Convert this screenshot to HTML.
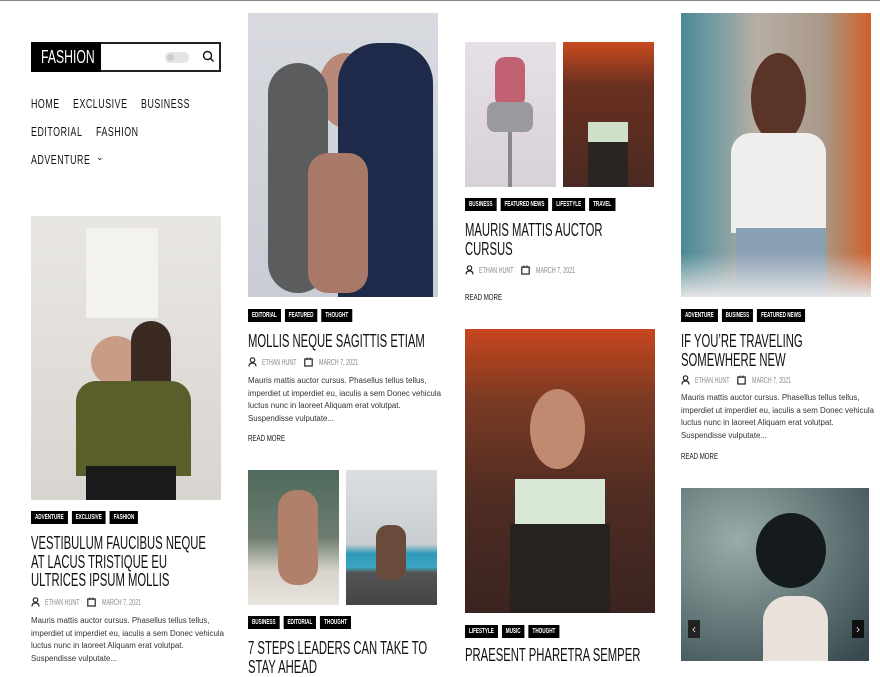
<!DOCTYPE html>
<html><head><meta charset="utf-8"><style>
*{margin:0;padding:0;box-sizing:border-box}
body{width:880px;height:660px;overflow:hidden;background:#fff;position:relative;font-family:"Liberation Sans",sans-serif;border-top:1px solid #888}
.a{position:absolute}
.s{transform-origin:0 0;white-space:nowrap}
.img{position:absolute;overflow:hidden}
.tags{position:absolute;display:flex;gap:6px;transform:scaleX(.66);transform-origin:0 0}
.tags span{background:#000;color:#fff;font-weight:bold;font-size:7px;height:13px;line-height:13px;padding:0 6px;text-transform:uppercase;white-space:nowrap}
.t{position:absolute;font-size:18.5px;line-height:18.5px;color:#111;text-transform:uppercase;white-space:nowrap;transform:scaleX(.61);transform-origin:0 0}
.mt{position:absolute;font-size:8px;color:#888;transform:scaleX(.67);transform-origin:0 0;white-space:nowrap}
.x{position:absolute;font-size:7.9px;line-height:12.5px;color:#333;white-space:nowrap}
.r{position:absolute;font-size:8.5px;color:#111;transform:scaleX(.72);transform-origin:0 0;white-space:nowrap}
.nav{position:absolute;font-size:13px;color:#111;transform:scaleX(.68);transform-origin:0 0;white-space:nowrap;letter-spacing:.8px}
</style></head><body>
<!-- header -->
<div class="a" style="left:31px;top:41px;width:190px;height:30px;border:2px solid #222"></div>
<div class="a" style="left:31px;top:41px;width:70px;height:30px;background:#000"></div>
<div class="a s" style="left:41px;top:46px;color:#fff;font-size:18px;line-height:20px;transform:scaleX(.68)">FASHION</div>
<div class="a" style="left:165px;top:51px;width:24px;height:11px;border-radius:6px;background:#e4e4e4"></div>
<div class="a" style="left:167px;top:53px;width:7px;height:7px;border-radius:50%;background:#ccc"></div>
<svg class="a" style="left:202px;top:49px" width="13" height="13" viewBox="0 0 13 13"><circle cx="5.5" cy="5.5" r="4" fill="none" stroke="#111" stroke-width="1.4"/><line x1="8.5" y1="8.5" x2="11.5" y2="11.5" stroke="#111" stroke-width="1.4"/></svg>
<div class="nav" style="left:31px;top:95px">HOME</div>
<div class="nav" style="left:73px;top:95px">EXCLUSIVE</div>
<div class="nav" style="left:141px;top:95px">BUSINESS</div>
<div class="nav" style="left:31px;top:123px">EDITORIAL</div>
<div class="nav" style="left:96px;top:123px">FASHION</div>
<div class="nav" style="left:31px;top:151px">ADVENTURE</div>
<div class="a" style="left:96px;top:151px;font-size:9px">&#8964;</div>

<!-- col1 -->
<div class="img" style="left:31px;top:215px;width:190px;height:284px;background:linear-gradient(180deg,#e8e6e3 0%,#e2dfdc 40%,#d8d5d0 100%)">
 <div class="a" style="left:55px;top:12px;width:72px;height:90px;background:#f4f2ee"></div>
 <div class="a" style="left:60px;top:120px;width:50px;height:50px;border-radius:50%;background:#c89c86"></div>
 <div class="a" style="left:100px;top:105px;width:40px;height:100px;background:#3a2a22;border-radius:20px"></div>
 <div class="a" style="left:45px;top:165px;width:115px;height:95px;background:#5a5e2a;border-radius:20px 20px 0 0"></div>
 <div class="a" style="left:55px;top:250px;width:90px;height:34px;background:#1a1a1a"></div>
</div>
<div class="tags" style="left:31px;top:510px"><span>Adventure</span><span>Exclusive</span><span>Fashion</span></div>
<div class="t" style="left:31px;top:533px">Vestibulum faucibus neque<br>at lacus tristique eu<br>ultrices ipsum mollis</div>
<svg class="a" style="left:31px;top:596px" width="9" height="10" viewBox="0 0 9 10"><circle cx="4.5" cy="3" r="2.2" fill="none" stroke="#222" stroke-width="1.2"/><path d="M1 9.5c0-2.5 1.5-3.5 3.5-3.5s3.5 1 3.5 3.5" fill="none" stroke="#222" stroke-width="1.2"/></svg>
<div class="mt" style="left:45px;top:597px">ETHAN HUNT</div>
<svg class="a" style="left:87px;top:596px" width="9" height="10" viewBox="0 0 9 10"><rect x="0.8" y="2" width="7.4" height="7" fill="none" stroke="#222" stroke-width="1.2"/><line x1="3" y1="0.5" x2="3" y2="3" stroke="#222"/><line x1="6" y1="0.5" x2="6" y2="3" stroke="#222"/></svg>
<div class="mt" style="left:102px;top:597px">MARCH 7, 2021</div>
<div class="x" style="left:31px;top:614px">Mauris mattis auctor cursus. Phasellus tellus tellus,<br>imperdiet ut imperdiet eu, iaculis a sem Donec vehicula<br>luctus nunc in laoreet Aliquam erat volutpat.<br>Suspendisse vulputate...</div>

<!-- col2 -->
<div class="img" style="left:248px;top:12px;width:190px;height:284px;background:linear-gradient(180deg,#d8dae0,#c9ccd4)">
 <div class="a" style="left:70px;top:40px;width:55px;height:75px;border-radius:50%;background:#b88878"></div>
 <div class="a" style="left:20px;top:50px;width:60px;height:230px;background:#5a5c5e;border-radius:30px"></div>
 <div class="a" style="left:90px;top:30px;width:95px;height:254px;background:#1e2a4a;border-radius:40px 40px 0 0"></div>
 <div class="a" style="left:60px;top:140px;width:60px;height:140px;background:#a87868;border-radius:20px"></div>
</div>
<div class="tags" style="left:248px;top:308px"><span>Editorial</span><span>Featured</span><span>Thought</span></div>
<div class="t" style="left:248px;top:331px">Mollis neque sagittis etiam</div>
<svg class="a" style="left:248px;top:356px" width="9" height="10" viewBox="0 0 9 10"><circle cx="4.5" cy="3" r="2.2" fill="none" stroke="#222" stroke-width="1.2"/><path d="M1 9.5c0-2.5 1.5-3.5 3.5-3.5s3.5 1 3.5 3.5" fill="none" stroke="#222" stroke-width="1.2"/></svg>
<div class="mt" style="left:262px;top:357px">ETHAN HUNT</div>
<svg class="a" style="left:304px;top:356px" width="9" height="10" viewBox="0 0 9 10"><rect x="0.8" y="2" width="7.4" height="7" fill="none" stroke="#222" stroke-width="1.2"/><line x1="3" y1="0.5" x2="3" y2="3" stroke="#222"/><line x1="6" y1="0.5" x2="6" y2="3" stroke="#222"/></svg>
<div class="mt" style="left:319px;top:357px">MARCH 7, 2021</div>
<div class="x" style="left:248px;top:374px">Mauris mattis auctor cursus. Phasellus tellus tellus,<br>imperdiet ut imperdiet eu, iaculis a sem Donec vehicula<br>luctus nunc in laoreet Aliquam erat volutpat.<br>Suspendisse vulputate...</div>
<div class="r" style="left:248px;top:432px">READ MORE</div>
<div class="img" style="left:248px;top:469px;width:91px;height:135px;background:linear-gradient(180deg,#4f6a5c 0%,#6d7c70 50%,#d8d4cc 75%,#e8e4de)">
 <div class="a" style="left:30px;top:20px;width:40px;height:95px;background:#b0806a;border-radius:18px"></div>
</div>
<div class="img" style="left:346px;top:469px;width:91px;height:135px;background:linear-gradient(180deg,#dcdfe2 0%,#c9cdd0 55%,#2e9ab8 62%,#3aa6c4 72%,#555 76%,#444)">
 <div class="a" style="left:30px;top:55px;width:30px;height:55px;background:#6a4a3a;border-radius:12px"></div>
</div>
<div class="tags" style="left:248px;top:615px"><span>Business</span><span>Editorial</span><span>Thought</span></div>
<div class="t" style="left:248px;top:638px">7 steps leaders can take to<br>stay ahead</div>

<!-- col3 -->
<div class="img" style="left:465px;top:41px;width:91px;height:145px;background:linear-gradient(180deg,#e6e0e6,#d8d2d8)">
 <div class="a" style="left:30px;top:15px;width:30px;height:50px;background:#c06070;border-radius:10px"></div>
 <div class="a" style="left:22px;top:60px;width:46px;height:30px;background:#9a9a9e;border-radius:8px"></div>
 <div class="a" style="left:43px;top:90px;width:4px;height:55px;background:#888"></div>
</div>
<div class="img" style="left:563px;top:41px;width:91px;height:145px;background:linear-gradient(180deg,#c84a20,#6a3020 30%,#4a2a22)">
 <div class="a" style="left:25px;top:80px;width:40px;height:20px;background:#cfe0c8"></div>
 <div class="a" style="left:25px;top:100px;width:40px;height:45px;background:#2a2422"></div>
</div>
<div class="tags" style="left:465px;top:197px"><span>Business</span><span>Featured News</span><span>Lifestyle</span><span>Travel</span></div>
<div class="t" style="left:465px;top:220px">Mauris mattis auctor<br>cursus</div>
<svg class="a" style="left:465px;top:264px" width="9" height="10" viewBox="0 0 9 10"><circle cx="4.5" cy="3" r="2.2" fill="none" stroke="#222" stroke-width="1.2"/><path d="M1 9.5c0-2.5 1.5-3.5 3.5-3.5s3.5 1 3.5 3.5" fill="none" stroke="#222" stroke-width="1.2"/></svg>
<div class="mt" style="left:479px;top:265px">ETHAN HUNT</div>
<svg class="a" style="left:521px;top:264px" width="9" height="10" viewBox="0 0 9 10"><rect x="0.8" y="2" width="7.4" height="7" fill="none" stroke="#222" stroke-width="1.2"/><line x1="3" y1="0.5" x2="3" y2="3" stroke="#222"/><line x1="6" y1="0.5" x2="6" y2="3" stroke="#222"/></svg>
<div class="mt" style="left:536px;top:265px">MARCH 7, 2021</div>
<div class="r" style="left:465px;top:291px">READ MORE</div>
<div class="img" style="left:465px;top:328px;width:190px;height:284px;background:linear-gradient(180deg,#c8461e 0%,#7a3a24 25%,#4e2c22 60%,#3a2420)">
 <div class="a" style="left:65px;top:60px;width:55px;height:80px;border-radius:50%;background:#c08a70"></div>
 <div class="a" style="left:50px;top:150px;width:90px;height:45px;background:#d8e8d4"></div>
 <div class="a" style="left:45px;top:195px;width:100px;height:89px;background:#262220"></div>
</div>
<div class="tags" style="left:465px;top:624px"><span>Lifestyle</span><span>Music</span><span>Thought</span></div>
<div class="t" style="left:465px;top:645px">Praesent pharetra semper</div>

<!-- col4 -->
<div class="img" style="left:681px;top:12px;width:190px;height:284px;background:linear-gradient(90deg,#4a8894 0%,#6f9aa2 15%,#b8aea4 40%,#a89888 75%,#d0602a 100%)">
 <div class="a" style="left:70px;top:40px;width:55px;height:90px;border-radius:50%;background:#5a3426"></div>
 <div class="a" style="left:50px;top:120px;width:95px;height:100px;background:#f0eeec;border-radius:20px 20px 0 0"></div>
 <div class="a" style="left:55px;top:215px;width:90px;height:69px;background:#8aa0b4"></div>
 <div class="a" style="left:0;top:240px;width:190px;height:44px;background:linear-gradient(180deg,rgba(235,235,235,0),#e4e4e6)"></div>
</div>
<div class="tags" style="left:681px;top:308px"><span>Adventure</span><span>Business</span><span>Featured News</span></div>
<div class="t" style="left:681px;top:331px">If you’re traveling<br>somewhere new</div>
<svg class="a" style="left:681px;top:374px" width="9" height="10" viewBox="0 0 9 10"><circle cx="4.5" cy="3" r="2.2" fill="none" stroke="#222" stroke-width="1.2"/><path d="M1 9.5c0-2.5 1.5-3.5 3.5-3.5s3.5 1 3.5 3.5" fill="none" stroke="#222" stroke-width="1.2"/></svg>
<div class="mt" style="left:695px;top:375px">ETHAN HUNT</div>
<svg class="a" style="left:737px;top:374px" width="9" height="10" viewBox="0 0 9 10"><rect x="0.8" y="2" width="7.4" height="7" fill="none" stroke="#222" stroke-width="1.2"/><line x1="3" y1="0.5" x2="3" y2="3" stroke="#222"/><line x1="6" y1="0.5" x2="6" y2="3" stroke="#222"/></svg>
<div class="mt" style="left:752px;top:375px">MARCH 7, 2021</div>
<div class="x" style="left:681px;top:391px">Mauris mattis auctor cursus. Phasellus tellus tellus,<br>imperdiet ut imperdiet eu, iaculis a sem Donec vehicula<br>luctus nunc in laoreet Aliquam erat volutpat.<br>Suspendisse vulputate...</div>
<div class="r" style="left:681px;top:450px">READ MORE</div>
<div class="img" style="left:681px;top:487px;width:188px;height:173px;background:radial-gradient(ellipse at 30% 30%,#9aaca8,#5a6e70 60%,#33444a)">
 <div class="a" style="left:75px;top:25px;width:70px;height:75px;border-radius:50%;background:#151a1e"></div>
 <div class="a" style="left:82px;top:108px;width:65px;height:70px;background:#e8e2da;border-radius:25px 25px 0 0"></div>
 <div class="a" style="left:7px;top:132px;width:12px;height:18px;background:#222;color:#ddd;font-size:12px;line-height:18px;text-align:center">&#8249;</div>
 <div class="a" style="left:171px;top:132px;width:12px;height:18px;background:#111;color:#ddd;font-size:12px;line-height:18px;text-align:center">&#8250;</div>
</div>
</body></html>
